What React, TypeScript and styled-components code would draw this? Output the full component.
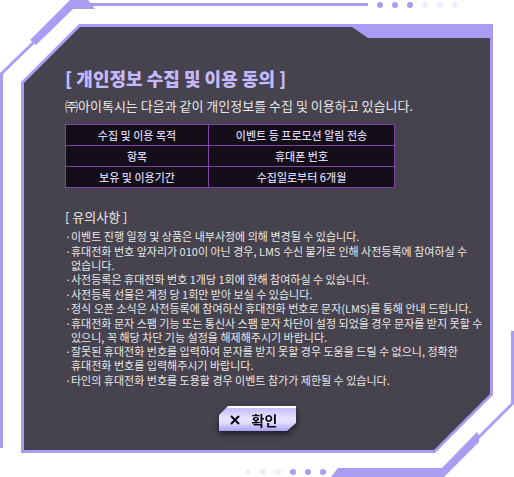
import React from "react";
import styled, { createGlobalStyle } from "styled-components";

const lilac = "#ab9cf3";
const pale = "#f1edfe";

const GlobalStyle = createGlobalStyle`
  *, *::before, *::after { box-sizing: border-box; }
  body {
    margin: 0;
    background: #ffffff;
    font-family: "Noto Sans CJK KR", "Noto Sans", sans-serif;
  }
`;

const Frame = styled.div`
  position: relative;
  padding: 24px 21px;
  overflow: hidden;
`;

const CornerArt = styled.svg<{ $end?: boolean }>`
  position: absolute;
  ${(p) => (p.$end ? "right: 0; bottom: 0;" : "left: 0; top: 0;")}
  fill: ${lilac};
`;

const Rail = styled.span<{ $side: "left" | "right" | "top" }>`
  position: absolute;
  background: ${lilac};
  ${(p) =>
    p.$side === "left"
      ? "left: 0; top: 73px; bottom: 29px; width: 3px;"
      : p.$side === "right"
        ? "right: 0; bottom: 73px; height: 73px; width: 3px;"
        : "left: 90px; right: 146px; top: 3px; height: 3px;"}
`;

const DotRow = styled.span<{ $end?: boolean }>`
  position: absolute;
  display: flex;
  gap: 9px;
  ${(p) => (p.$end ? "right: 188px; bottom: 2px;" : "right: 56px; top: 2px;")}
`;

const Dot = styled.i<{ $pale?: boolean }>`
  width: 6px;
  height: 6px;
  border-radius: 50%;
  background: ${(p) => (p.$pale ? pale : lilac)};
`;

const Border = styled.main`
  padding: 3px;
  background: ${lilac};
  clip-path: polygon(
    58px 0,
    100% 0,
    100% calc(100% - 58px),
    calc(100% - 58px) 100%,
    0 100%,
    0 58px
  );
`;

const Panel = styled.div`
  padding: 39px 5px 19px 41px;
  background: #46434f;
  color: #e9e8e6;
  clip-path: polygon(
    56px 0,
    calc(100% - 138px) 0,
    calc(100% - 122px) 11px,
    100% 11px,
    100% calc(100% - 56px),
    calc(100% - 56px) 100%,
    0 100%,
    0 56px
  );
`;

const Title = styled.h1`
  margin: 0;
  color: #c5b9ff;
  font-size: 18px;
  font-weight: 900;
  line-height: 24px;
`;

const Intro = styled.p`
  margin: 5px 0 7px;
  font-size: 13px;
  line-height: 22px;
`;

const Table = styled.table`
  width: 100%;
  max-width: 330px;
  border-collapse: collapse;
  table-layout: fixed;
  background: #130e18;
  color: #dcd3f5;
  font-size: 11px;
  line-height: 20px;
  text-align: center;
`;

const cell = `
  height: 21px;
  padding: 0;
  border: 1px solid #8145a9;
  font-weight: 500;
`;

const HeadCell = styled.th`
  ${cell}
  width: 143px;
`;

const DataCell = styled.td`
  ${cell}
`;

const NoticeTitle = styled.h2`
  margin: 19px 0 2px;
  font-size: 13px;
  font-weight: 400;
  line-height: 20px;
`;

const NoticeList = styled.ul`
  margin: 0;
  padding: 0;
  list-style: none;
  font-size: 11px;
  line-height: 14px;
  word-break: keep-all;
`;

const Notice = styled.li`
  display: grid;
  grid-template-columns: 6px 1fr;

  &:nth-child(even) {
    margin-top: 1px;
  }

  &::before {
    content: "·";
  }
`;

const Actions = styled.div`
  display: flex;
  justify-content: center;
  padding-right: 35px;
  margin-top: 19px;
  filter: drop-shadow(0 3px 3px #1c1a26);
`;

const ConfirmButton = styled.button`
  display: flex;
  align-items: center;
  justify-content: center;
  gap: 12px;
  width: 77px;
  height: 25px;
  padding: 0 8px 0 0;
  border: 0;
  border-top: 2px solid #ffffff;
  background: linear-gradient(#c5bdfb, #e6e3ff 45%, #dedbff 65%, #aaa2f4);
  color: #09080d;
  font: 700 14px/20px "Noto Sans CJK KR", sans-serif;
  cursor: pointer;
  clip-path: polygon(9px 0, 100% 0, 100% 17px, calc(100% - 9px) 100%, 0 100%, 0 9px);
`;

const purposeRows = [
  ["수집 및 이용 목적", "이벤트 등 프로모션 알림 전송"],
  ["항목", "휴대폰 번호"],
  ["보유 및 이용기간", "수집일로부터 6개월"],
];

const notices = [
  "이벤트 진행 일정 및 상품은 내부사정에 의해 변경될 수 있습니다.",
  "휴대전화 번호 앞자리가 010이 아닌 경우, LMS 수신 불가로 인해 사전등록에 참여하실 수 없습니다.",
  "사전등록은 휴대전화 번호 1개당 1회에 한해 참여하실 수 있습니다.",
  "사전등록 선물은 계정 당 1회만 받아 보실 수 있습니다.",
  "정식 오픈 소식은 사전등록에 참여하신 휴대전화 번호로 문자(LMS)를 통해 안내 드립니다.",
  "휴대전화 문자 스팸 기능 또는 통신사 스팸 문자 차단이 설정 되었을 경우 문자를 받지 못할 수 있으니, 꼭 해당 차단 기능 설정을 해제해주시기 바랍니다.",
  "잘못된 휴대전화 번호를 입력하여 문자를 받지 못할 경우 도움을 드릴 수 없으니, 정확한 휴대전화 번호를 입력해주시기 바랍니다.",
  "타인의 휴대전화 번호를 도용할 경우 이벤트 참가가 제한될 수 있습니다.",
];

export default function App() {
  return (
    <Frame>
      <GlobalStyle />
      <CornerArt width="96" height="76" aria-hidden="true">
        <path d="M0 73 33 41 35 43 3 74V76H0Z" />
        <path d="M30 40 70 0H88L95 9H73L36 45Z" />
      </CornerArt>
      <Rail $side="left" />
      <Rail $side="top" />
      <Rail $side="right" />
      <DotRow>
        <Dot />
        <Dot />
        <Dot />
        <Dot $pale />
        <Dot $pale />
        <Dot $pale />
      </DotRow>
      <CornerArt $end width="184" height="76" aria-hidden="true">
        <path d="M181 0H184V3L149 38 147 36 181 2Z" />
        <path d="M147 31 149 34V41L114 76H1L8 67H112Z" />
      </CornerArt>
      <DotRow $end>
        <Dot $pale />
        <Dot $pale />
        <Dot $pale />
        <Dot />
        <Dot />
        <Dot />
      </DotRow>

      <Border>
        <Panel>
          <Title>[ 개인정보 수집 및 이용 동의 ]</Title>
          <Intro>㈜아이톡시는 다음과 같이 개인정보를 수집 및 이용하고 있습니다.</Intro>
          <Table>
            <tbody>
              {purposeRows.map(([label, value]) => (
                <tr key={label}>
                  <HeadCell scope="row">{label}</HeadCell>
                  <DataCell>{value}</DataCell>
                </tr>
              ))}
            </tbody>
          </Table>
          <NoticeTitle>[ 유의사항 ]</NoticeTitle>
          <NoticeList>
            {notices.map((text) => (
              <Notice key={text}>{text}</Notice>
            ))}
          </NoticeList>
          <Actions>
            <ConfirmButton type="button">
              <svg width="10" height="10" viewBox="0 0 10 10" aria-hidden="true">
                <path d="M1 1 9 9M9 1 1 9" stroke="#09080d" strokeWidth="2" />
              </svg>
              확인
            </ConfirmButton>
          </Actions>
        </Panel>
      </Border>
    </Frame>
  );
}
